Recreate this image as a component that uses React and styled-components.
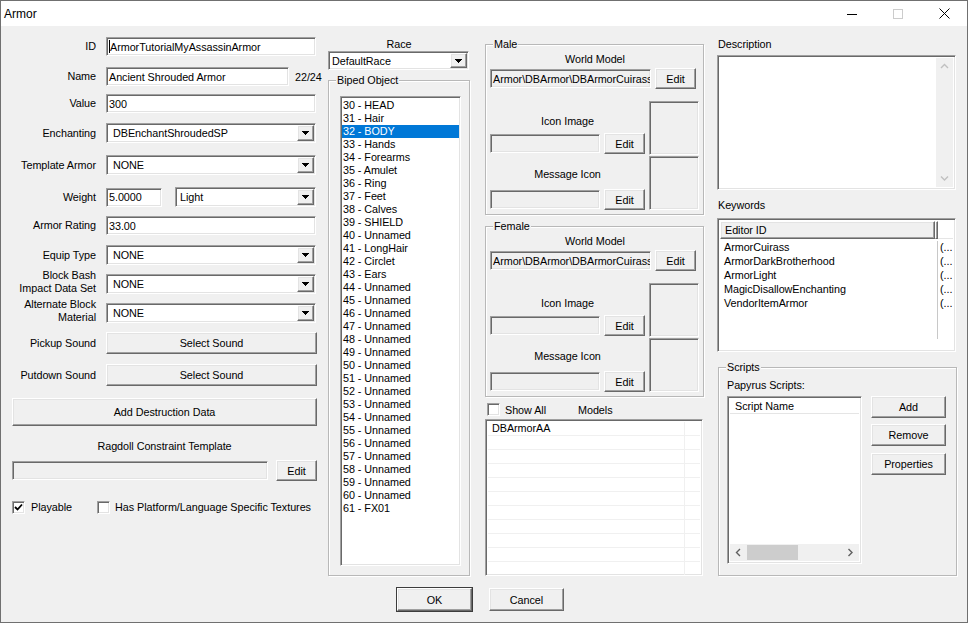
import React from "react";
import styled, { createGlobalStyle, css } from "styled-components";

const GlobalStyle = createGlobalStyle`
  html, body {
    margin: 0;
    padding: 0;
    background: #f0f0f0;
  }
  body {
    font-family: "Liberation Sans", Arial, sans-serif;
    font-size: 10.8px;
    letter-spacing: -0.05px;
    color: #000;
  }
  * {
    box-sizing: border-box;
  }
`;

const sunken = css`
  border-style: solid;
  border-width: 1px;
  border-color: #a0a0a0 #ffffff #ffffff #a0a0a0;
  box-shadow: inset 1px 1px 0 #696969, inset -1px -1px 0 #e3e3e3;
`;

const raised = css`
  border-style: solid;
  border-width: 1px;
  border-color: #ffffff #696969 #696969 #ffffff;
  box-shadow: inset -1px -1px 0 #a0a0a0, inset 1px 1px 0 #e3e3e3;
  background: #f0f0f0;
`;

const Window = styled.div`
  width: 968px;
  height: 623px;
  border: 1px solid #707070;
  background: #f0f0f0;
  display: flex;
  flex-direction: column;
  overflow: hidden;
`;

const TitleBar = styled.div`
  height: 25px;
  flex-shrink: 0;
  background: #fff;
  display: flex;
  align-items: center;
`;

const Title = styled.div`
  flex: 1;
  padding-left: 3px;
  font-size: 12px;
  letter-spacing: 0;
`;

const Caption = styled.div`
  width: 46px;
  height: 25px;
  display: flex;
  align-items: center;
  justify-content: center;
`;

const Body = styled.div`
  display: flex;
  height: 560px;
  padding-left: 11px;
`;

const Column = styled.div`
  display: flex;
  flex-direction: column;
  width: ${p => p.$w}px;
  margin-left: ${p => p.$ml || 0}px;
  flex-shrink: 0;
`;

const Row = styled.div`
  display: flex;
  align-items: center;
  height: ${p => p.$h}px;
  margin-top: ${p => p.$mt || 0}px;
  margin-left: ${p => p.$ml || 0}px;
  gap: ${p => p.$gap || 0}px;
  flex-shrink: 0;
`;

const Label = styled.div`
  width: 84px;
  flex-shrink: 0;
  margin-right: 10px;
  text-align: right;
  line-height: 13px;
  margin-bottom: ${p => p.$lift || 0}px;
`;

const Text = styled.div`
  line-height: 12px;
  height: 12px;
  white-space: nowrap;
  margin-top: ${p => p.$mt || 0}px;
  margin-left: ${p => p.$ml || 0}px;
  text-align: ${p => (p.$center ? "center" : "left")};
  flex-shrink: 0;
`;

const TextBox = styled.div`
  ${sunken};
  height: ${p => p.$h || 19}px;
  width: ${p => (p.$w ? `${p.$w}px` : "auto")};
  flex: ${p => (p.$w ? "none" : 1)};
  background: ${p => (p.$disabled ? "#f0f0f0" : "#fff")};
  padding: 0 0 0 2px;
  display: flex;
  align-items: center;
  white-space: nowrap;
  overflow: hidden;
`;

const Caret = styled.span`
  display: inline-block;
  width: 1px;
  height: 13px;
  background: #000;
`;

const ComboBox = styled.div`
  ${sunken};
  height: ${p => p.$h || 20}px;
  width: ${p => p.$w}px;
  flex: none;
  background: #fff;
  display: flex;
  align-items: stretch;
  padding: 1px 1px 1px ${p => p.$pl}px;
`;

const ComboText = styled.div`
  flex: 1;
  display: flex;
  align-items: center;
  white-space: nowrap;
  overflow: hidden;
`;

const DropButton = styled.div`
  ${raised};
  width: 17px;
  display: flex;
  align-items: center;
  justify-content: center;
`;

const Button = styled.div`
  ${raised};
  height: ${p => p.$h || 22}px;
  width: ${p => (p.$w ? `${p.$w}px` : "100%")};
  flex: none;
  margin-top: ${p => p.$mt || 0}px;
  display: flex;
  align-items: center;
  justify-content: center;
  white-space: nowrap;
  ${p =>
    p.$default &&
    css`
      outline: 1px solid #3c3c3c;
    `}
`;

const CheckBox = styled.div`
  ${sunken};
  width: 13px;
  height: 13px;
  background: #fff;
  flex-shrink: 0;
  margin-left: ${p => p.$ml || 0}px;
  display: flex;
  align-items: center;
  justify-content: center;
`;

const Group = styled.div`
  position: relative;
  width: ${p => p.$w}px;
  height: ${p => p.$h}px;
  margin-top: ${p => p.$mt || 0}px;
  margin-left: ${p => p.$ml || 0}px;
  border: 1px solid #b8b8b8;
  box-shadow: inset 1px 1px 0 #fff, 1px 1px 0 #fff;
  display: flex;
  flex-direction: column;
  padding: ${p => p.$pad || "0"};
  flex-shrink: 0;
`;

const Legend = styled.div`
  position: absolute;
  top: -7px;
  left: 7px;
  padding: 0 1px;
  line-height: 13px;
  background: #f0f0f0;
`;

const ListBox = styled.div`
  ${sunken};
  background: #fff;
  width: 121px;
  height: 470px;
  margin: 15px 0 0 11px;
  padding: 2px 1px 0 1px;
  overflow: hidden;
`;

const ListItem = styled.div`
  height: 13px;
  line-height: 13px;
  padding-left: 1px;
  white-space: nowrap;
  background: ${p => (p.$selected ? "#0078d7" : "transparent")};
  color: ${p => (p.$selected ? "#fff" : "#000")};
`;

const ListView = styled.div`
  ${sunken};
  background: #fff;
  width: ${p => p.$w}px;
  height: ${p => p.$h}px;
  margin-top: ${p => p.$mt || 0}px;
  padding: 2px;
  display: flex;
  flex-direction: ${p => (p.$row ? "row" : "column")};
  overflow: hidden;
  flex-shrink: 0;
`;

const HeaderRow = styled.div`
  display: flex;
  height: ${p => p.$h}px;
  flex-shrink: 0;
`;

const HeaderCell = styled.div`
  ${p =>
    p.$raised
      ? raised
      : css`
          border-bottom: 1px solid #e5e5e5;
          background: #fff;
        `};
  width: ${p => (p.$w ? `${p.$w}px` : "auto")};
  flex: ${p => (p.$w ? "none" : 1)};
  display: flex;
  align-items: center;
  padding-left: ${p => p.$pl ?? 4}px;
  white-space: nowrap;
`;

const ViewRow = styled.div`
  display: flex;
  height: 14px;
  flex-shrink: 0;
  border-bottom: ${p => (p.$grid ? "1px solid #f0f0f0" : "none")};
`;

const Cell = styled.div`
  width: ${p => (p.$w ? `${p.$w}px` : "auto")};
  flex: ${p => (p.$w ? "none" : 1)};
  line-height: 13px;
  padding-left: ${p => p.$pl ?? 4}px;
  white-space: nowrap;
  overflow: hidden;
  border-right: ${p => (p.$divider ? `1px solid ${p.$divider}` : "none")};
`;

const ScrollTrack = styled.div`
  background: #f0f0f0;
  display: flex;
  flex-direction: ${p => (p.$vertical ? "column" : "row")};
  ${p =>
    p.$vertical
      ? css`
          width: 17px;
          height: 100%;
        `
      : css`
          height: 17px;
          width: 100%;
        `};
  flex-shrink: 0;
`;

const ScrollArrow = styled.div`
  width: 17px;
  height: 17px;
  display: flex;
  align-items: center;
  justify-content: center;
  flex-shrink: 0;
`;

const ScrollThumb = styled.div`
  background: #cdcdcd;
  width: ${p => p.$w}px;
  margin: 1px 0;
`;

const Spacer = styled.div`
  flex: 1;
`;

const Preview = styled.div`
  ${sunken};
  width: 50px;
  height: 54px;
  background: #f0f0f0;
`;

const Footer = styled.div`
  display: flex;
  justify-content: center;
  gap: 17px;
  margin-top: 2px;
  padding-right: 7px;
`;

const Arrow = () => (
  <svg width="7" height="4" viewBox="0 0 7 4" shapeRendering="crispEdges">
    <path d="M0 0h7v1h-1v1h-1v1h-1v1h-1v-1h-1v-1h-1v-1h-1z" fill="#000" />
  </svg>
);

const Chevron = ({ dir, color }) => {
  const pts = {
    up: "1,5 4.5,1.5 8,5",
    down: "1,1.5 4.5,5 8,1.5",
    left: "5,1 1.5,4.5 5,8",
    right: "1.5,1 5,4.5 1.5,8"
  }[dir];
  const size = dir === "up" || dir === "down" ? [9, 7] : [7, 9];
  return (
    <svg width={size[0]} height={size[1]} viewBox={`0 0 ${size[0]} ${size[1]}`}>
      <polyline points={pts} fill="none" stroke={color} strokeWidth="1.4" />
    </svg>
  );
};

const Check = () => (
  <svg width="9" height="9" viewBox="0 0 9 9">
    <polyline points="1,4 3.5,6.5 8,1.5" fill="none" stroke="#000" strokeWidth="1.8" />
  </svg>
);

const Combo = ({ value, w, h, pl = 6 }) => (
  <ComboBox $w={w} $h={h} $pl={pl}>
    <ComboText>{value}</ComboText>
    <DropButton>
      <Arrow />
    </DropButton>
  </ComboBox>
);

const bipeds = [
  "30 - HEAD",
  "31 - Hair",
  "32 - BODY",
  "33 - Hands",
  "34 - Forearms",
  "35 - Amulet",
  "36 - Ring",
  "37 - Feet",
  "38 - Calves",
  "39 - SHIELD",
  "40 - Unnamed",
  "41 - LongHair",
  "42 - Circlet",
  "43 - Ears",
  ...Array.from({ length: 17 }, (_, i) => `${44 + i} - Unnamed`),
  "61 - FX01"
];

const keywords = [
  "ArmorCuirass",
  "ArmorDarkBrotherhood",
  "ArmorLight",
  "MagicDisallowEnchanting",
  "VendorItemArmor"
];

const ModelGroup = ({ title, mt }) => (
  <Group $w={219} $h={171} $mt={mt} $pad="0 3px 0 4px">
    <Legend>{title}</Legend>
    <Text $mt={8} $center>
      World Model
    </Text>
    <Row $h={21} $mt={3} $gap={4}>
      <TextBox $w={161} $disabled>
        Armor\DBArmor\DBArmorCuirass
      </TextBox>
      <Button $w={41} $h={21}>
        Edit
      </Button>
    </Row>
    <Row $h={109} $mt={12} $gap={4} style={{ alignItems: "flex-start" }}>
      <Column $w={155}>
        <Text $mt={14} $center>
          Icon Image
        </Text>
        <Row $h={21} $mt={6} $gap={4}>
          <TextBox $w={110} $disabled />
          <Button $w={41} $h={21}>
            Edit
          </Button>
        </Row>
        <Text $mt={14} $center>
          Message Icon
        </Text>
        <Row $h={21} $mt={9} $gap={4}>
          <TextBox $w={110} $disabled />
          <Button $w={41} $h={21}>
            Edit
          </Button>
        </Row>
      </Column>
      <Column $w={50} style={{ gap: 1 }}>
        <Preview />
        <Preview />
      </Column>
    </Row>
  </Group>
);

const App = () => {
  return (
    <>
      <GlobalStyle />
      <Window>
        <TitleBar>
          <Title>Armor</Title>
          <Caption>
            <svg width="10" height="10" viewBox="0 0 10 10" shapeRendering="crispEdges">
              <rect x="0" y="5" width="10" height="1" fill="#000" />
            </svg>
          </Caption>
          <Caption>
            <svg width="10" height="10" viewBox="0 0 10 10" shapeRendering="crispEdges">
              <rect x="0.5" y="0.5" width="9" height="9" fill="none" stroke="#cccccc" />
            </svg>
          </Caption>
          <Caption>
            <svg width="11" height="11" viewBox="0 0 11 11">
              <path d="M0.5 0.5L10.5 10.5M10.5 0.5L0.5 10.5" stroke="#000" strokeWidth="1" />
            </svg>
          </Caption>
        </TitleBar>

        <Body>
          {/* left: record fields */}
          <Column $w={305}>
            <Row $h={19} $mt={11}>
              <Label>ID</Label>
              <TextBox $w={210}>
                <Caret />
                ArmorTutorialMyAssassinArmor
              </TextBox>
            </Row>
            <Row $h={19} $mt={11}>
              <Label>Name</Label>
              <TextBox $w={183}>Ancient Shrouded Armor</TextBox>
              <Text $ml={6}>22/24</Text>
            </Row>
            <Row $h={19} $mt={8}>
              <Label>Value</Label>
              <TextBox $w={210}>300</TextBox>
            </Row>
            <Row $h={20} $mt={10}>
              <Label>Enchanting</Label>
              <Combo w={210} value="DBEnchantShroudedSP" />
            </Row>
            <Row $h={20} $mt={12}>
              <Label>Template Armor</Label>
              <Combo w={210} value="NONE" />
            </Row>
            <Row $h={20} $mt={12}>
              <Label>Weight</Label>
              <TextBox $w={56}>5.0000</TextBox>
              <Row $h={20} $ml={13}>
                <Combo w={141} value="Light" pl={4} />
              </Row>
            </Row>
            <Row $h={19} $mt={9}>
              <Label>Armor Rating</Label>
              <TextBox $w={210}>33.00</TextBox>
            </Row>
            <Row $h={20} $mt={10}>
              <Label>Equip Type</Label>
              <Combo w={210} value="NONE" />
            </Row>
            <Row $h={20} $mt={9}>
              <Label $lift={5}>
                Block Bash
                <br />
                Impact Data Set
              </Label>
              <Combo w={210} value="NONE" />
            </Row>
            <Row $h={20} $mt={9}>
              <Label $lift={5}>
                Alternate Block
                <br />
                Material
              </Label>
              <Combo w={210} value="NONE" />
            </Row>
            <Row $h={22} $mt={9}>
              <Label>Pickup Sound</Label>
              <Button $w={211} $h={22}>
                Select Sound
              </Button>
            </Row>
            <Row $h={22} $mt={10}>
              <Label>Putdown Sound</Label>
              <Button $w={211} $h={22}>
                Select Sound
              </Button>
            </Row>
            <Button $h={28} $mt={12}>
              Add Destruction Data
            </Button>
            <Text $mt={14} $center>
              Ragdoll Constraint Template
            </Text>
            <Row $h={21} $mt={8} $gap={8}>
              <TextBox $w={256} $disabled />
              <Button $w={41} $h={21}>
                Edit
              </Button>
            </Row>
            <Row $h={14} $mt={19}>
              <CheckBox>
                <Check />
              </CheckBox>
              <Text $ml={6}>Playable</Text>
              <CheckBox $ml={25} />
              <Text $ml={5}>Has Platform/Language Specific Textures</Text>
            </Row>
          </Column>

          {/* race / biped slots */}
          <Column $w={142} $ml={11}>
            <Text $mt={12} $center>
              Race
            </Text>
            <Row $h={19} $mt={1}>
              <Combo w={141} h={19} value="DefaultRace" pl={3} />
            </Row>
            <Group $w={142} $h={496} $mt={10}>
              <Legend>Biped Object</Legend>
              <ListBox>
                {bipeds.map(b => (
                  <ListItem key={b} $selected={b === "32 - BODY"}>
                    {b}
                  </ListItem>
                ))}
              </ListBox>
            </Group>
          </Column>

          {/* male / female models */}
          <Column $w={220} $ml={15}>
            <ModelGroup title="Male" mt={18} />
            <ModelGroup title="Female" mt={11} />
            <Row $h={13} $mt={6} $ml={2}>
              <CheckBox />
              <Text $ml={5}>Show All</Text>
              <Text $ml={32}>Models</Text>
            </Row>
            <ListView $w={218} $h={157} $mt={3}>
              <div style={{ height: 1 }} />
              {Array.from({ length: 11 }, (_, i) => (
                <ViewRow key={i} $grid>
                  <Cell $w={197} $divider="#f0f0f0">
                    {i === 0 ? "DBArmorAA" : ""}
                  </Cell>
                  <Cell />
                </ViewRow>
              ))}
            </ListView>
          </Column>

          {/* description, keywords, scripts */}
          <Column $w={240} $ml={12}>
            <Text $mt={12} $ml={1}>
              Description
            </Text>
            <ListView $w={239} $h={135} $mt={5} $row>
              <Spacer />
              <ScrollTrack $vertical>
                <ScrollArrow>
                  <Chevron dir="up" color="#c0c0c0" />
                </ScrollArrow>
                <Spacer />
                <ScrollArrow>
                  <Chevron dir="down" color="#c0c0c0" />
                </ScrollArrow>
              </ScrollTrack>
            </ListView>
            <Text $mt={9} $ml={1}>
              Keywords
            </Text>
            <ListView $w={239} $h={134} $mt={7}>
              <HeaderRow $h={18}>
                <HeaderCell $raised $w={215} $pl={4}>
                  Editor ID
                </HeaderCell>
                <HeaderCell $raised $w={3} $pl={0} />
                <HeaderCell />
              </HeaderRow>
              <div style={{ height: 2 }} />
              {keywords.map(k => (
                <ViewRow key={k}>
                  <Cell $w={218} $pl={4} $divider="#c8c8c8">
                    {k}
                  </Cell>
                  <Cell $pl={2}>(...</Cell>
                </ViewRow>
              ))}
              <ViewRow>
                <Cell $w={218} $divider="#c8c8c8" />
              </ViewRow>
              <ViewRow>
                <Cell $w={218} $divider="#c8c8c8" />
              </ViewRow>
            </ListView>
            <Group $w={239} $h={209} $mt={15} $ml={1} $pad="0 0 0 8px">
              <Legend>Scripts</Legend>
              <Text $mt={11}>Papyrus Scripts:</Text>
              <Row $h={168} $mt={5} $gap={9} style={{ alignItems: "flex-start" }}>
                <ListView $w={135} $h={168}>
                  <HeaderRow $h={15}>
                    <HeaderCell $pl={5}>Script Name</HeaderCell>
                  </HeaderRow>
                  <Spacer />
                  <ScrollTrack>
                    <ScrollArrow>
                      <Chevron dir="left" color="#606060" />
                    </ScrollArrow>
                    <ScrollThumb $w={51} />
                    <Spacer />
                    <ScrollArrow>
                      <Chevron dir="right" color="#606060" />
                    </ScrollArrow>
                  </ScrollTrack>
                </ListView>
                <Column $w={75}>
                  <Button $w={75} $h={22}>
                    Add
                  </Button>
                  <Button $w={75} $h={22} $mt={6}>
                    Remove
                  </Button>
                  <Button $w={75} $h={22} $mt={7}>
                    Properties
                  </Button>
                </Column>
              </Row>
            </Group>
          </Column>
        </Body>

        <Footer>
          <Button $w={75} $h={23} $default>
            OK
          </Button>
          <Button $w={75} $h={23}>
            Cancel
          </Button>
        </Footer>
      </Window>
    </>
  );
};

export default App;
